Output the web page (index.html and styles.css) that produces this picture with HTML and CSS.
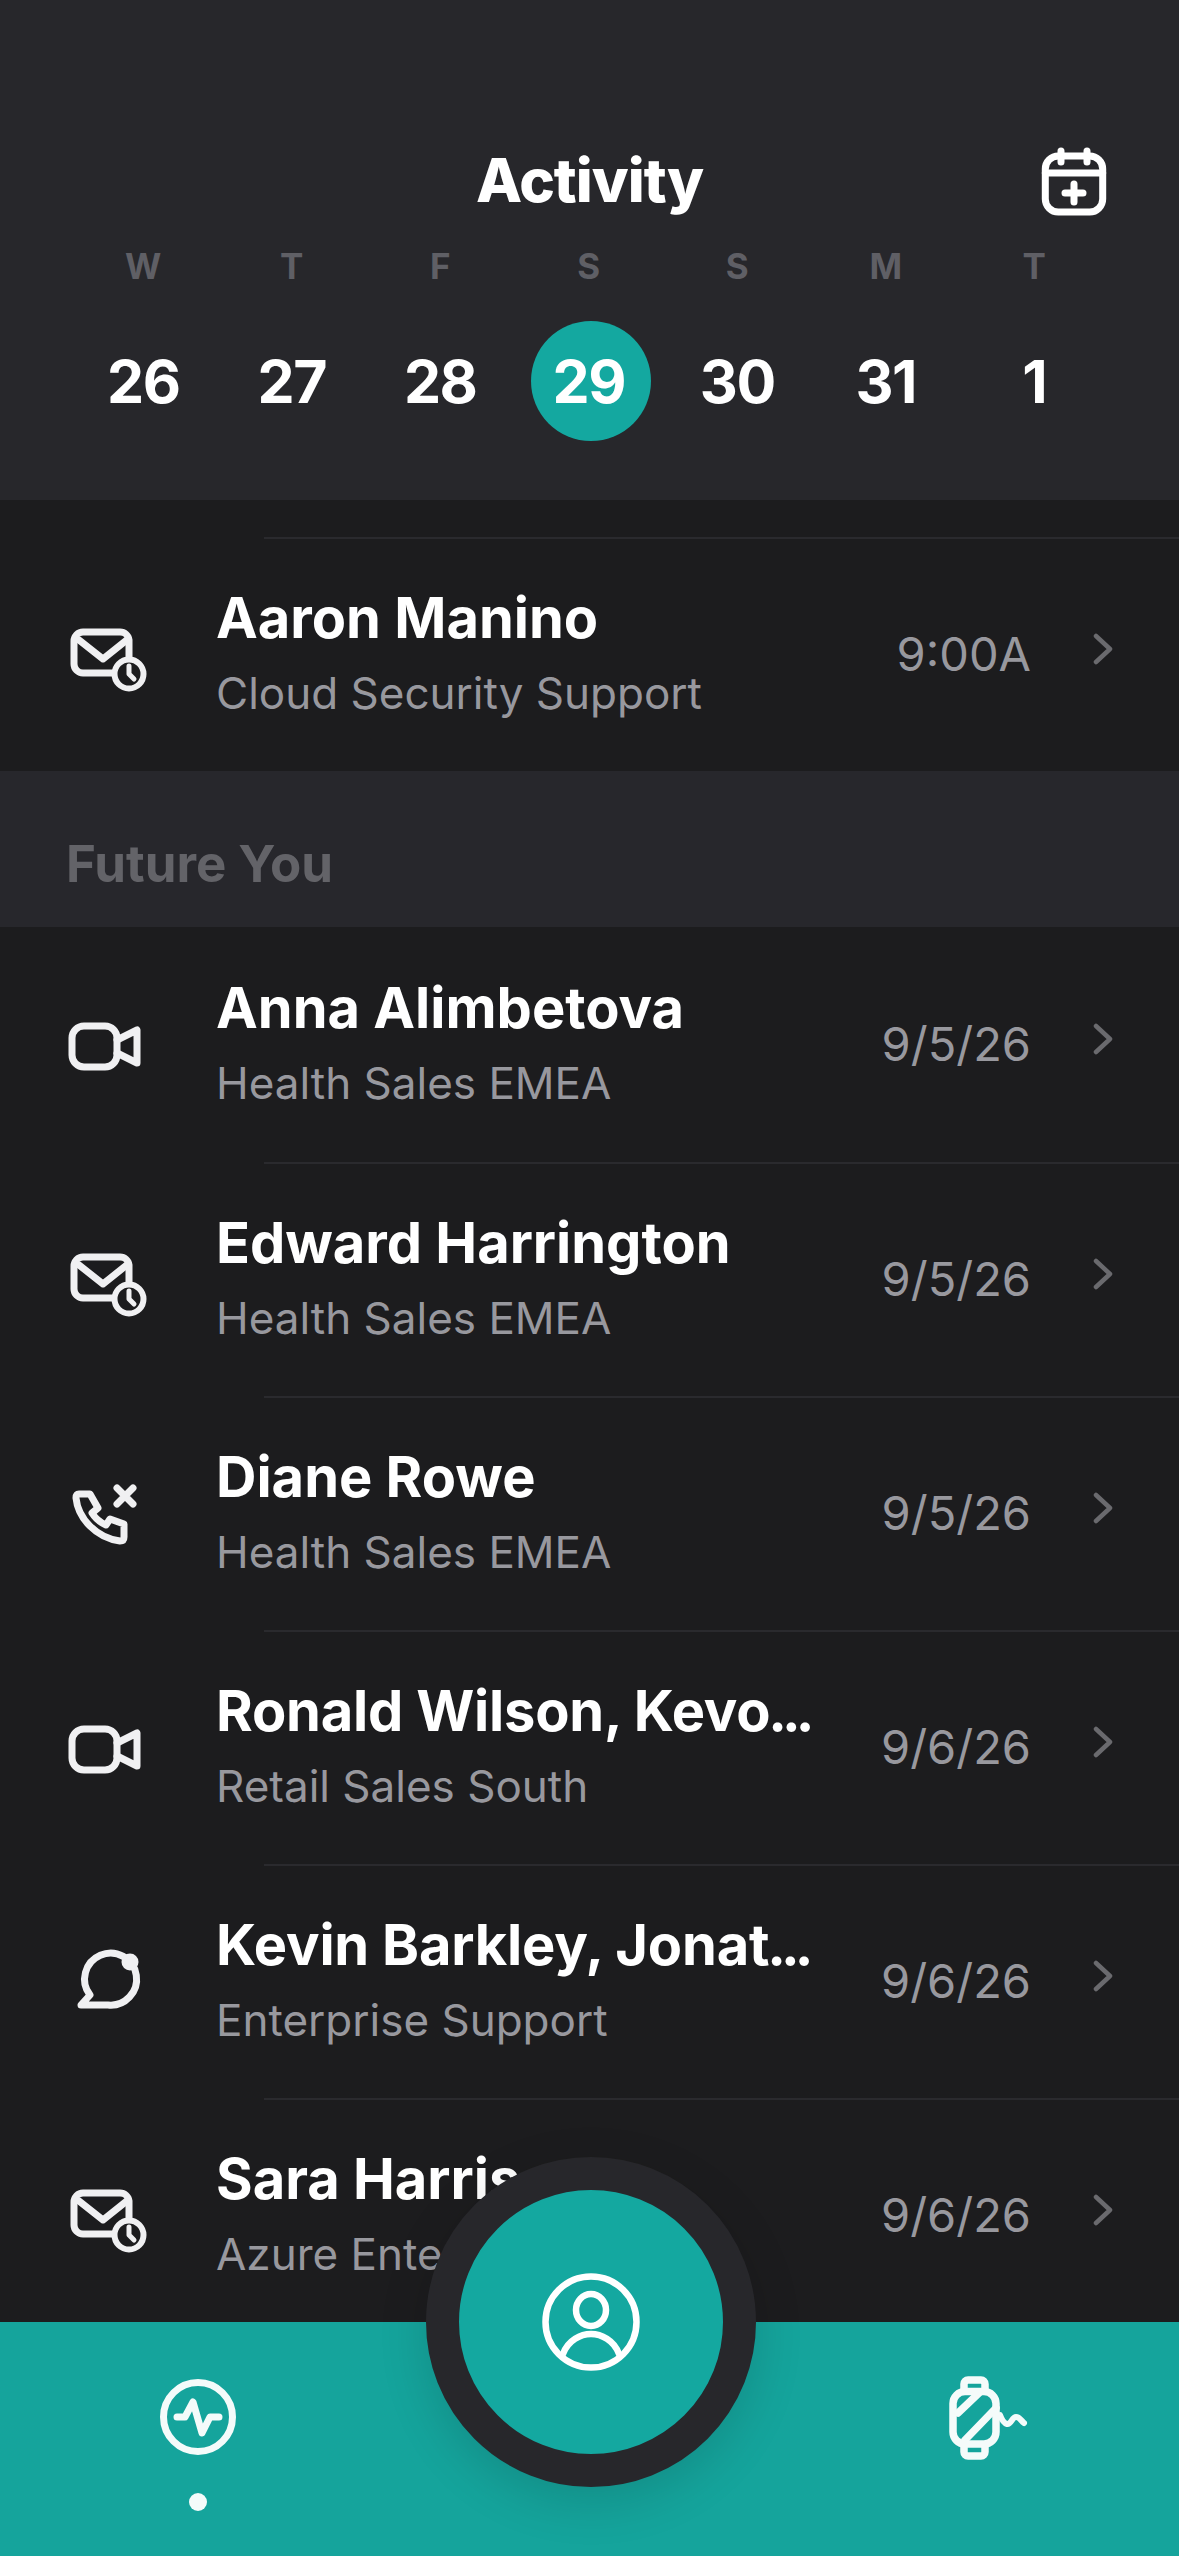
FILE: index.html
```html
<!DOCTYPE html>
<html lang="en">
<head>
<meta charset="utf-8">
<title>Activity</title>
<link rel="stylesheet" href="styles.css">
</head>
<body>
<svg class="defs" width="0" height="0" aria-hidden="true">
  <defs>
    <g id="i-mail" fill="none" stroke="#f0f0f2" stroke-width="7" stroke-linecap="round" stroke-linejoin="round">
      <path d="M46 60H17a9 9 0 0 1-9-9V28a9 9 0 0 1 9-9h37a9 9 0 0 1 9 8v16"/>
      <path d="M13 27l24 19 25-20"/>
      <circle cx="63" cy="61" r="14.5" stroke-width="6"/>
      <path d="M63 53v8l5 5" stroke-width="5"/>
    </g>
    <g id="i-video" fill="none" stroke="#f0f0f2" stroke-width="7" stroke-linecap="round" stroke-linejoin="round">
      <rect x="6" y="23" width="45" height="41" rx="12"/>
      <path d="M51 37l20-10v33L51 50"/>
    </g>
    <g id="i-phone" fill="none" stroke="#f0f0f2" stroke-width="7" stroke-linecap="round" stroke-linejoin="round">
      <path d="M13 22H24L32 36L26 41Q31 49 40 53L44 47L58 52V65Q58 69 54 69C30 66 12 46 10 26Q10 22 13 22Z"/>
      <path d="M51 16l16 16M67 16L51 32"/>
    </g>
    <g id="i-chat" fill="none" stroke="#f0f0f2" stroke-width="7" stroke-linecap="round" stroke-linejoin="round">
      <path d="M42 65H15L24 55A26 26 0 1 1 42 65Z"/>
      <circle cx="64" cy="22" r="8.5" fill="#f0f0f2" stroke="none"/>
    </g>
    <path id="i-chev" d="M4 4l14 13L4 30" fill="none" stroke="#6a6a6e" stroke-width="4.5" stroke-linecap="round" stroke-linejoin="round"/>
  </defs>
</svg>
<div class="app">
  <header class="head">
    <div class="titlebar">
      <h1 class="title">Activity</h1>
      <svg class="cal" width="66" height="70" viewBox="0 0 66 70" fill="none" stroke="#fff" stroke-width="7" stroke-linecap="round" stroke-linejoin="round"><rect x="4.3" y="10" width="57.4" height="56" rx="13"/><path d="M4.3 27h57.4M20 5v11M46 5v11M33 38v18M24 47h18"/></svg>
    </div>
    <div class="week">
      <span class="dow">W</span><span class="dow">T</span><span class="dow">F</span><span class="dow">S</span><span class="dow">S</span><span class="dow">M</span><span class="dow">T</span>
      <span class="num">26</span><span class="num">27</span><span class="num">28</span><span class="num num-on">29</span><span class="num">30</span><span class="num">31</span><span class="num">1</span>
    </div>
  </header>
  <main class="list">
    <div class="gap"></div>
    <div class="sep"></div>
    <div class="row">
      <svg class="ico" viewBox="0 0 84 84"><use href="#i-mail"/></svg>
      <div class="main"><div class="name">Aaron Manino</div><div class="sub">Cloud Security Support</div></div>
      <div class="when">9:00A</div>
      <svg class="chev" viewBox="0 0 21 34"><use href="#i-chev"/></svg>
    </div>
    <h2 class="section">Future You</h2>
    <div class="row row-first">
      <svg class="ico" viewBox="0 0 84 84"><use href="#i-video"/></svg>
      <div class="main"><div class="name">Anna Alimbetova</div><div class="sub">Health Sales EMEA</div></div>
      <div class="when">9/5/26</div>
      <svg class="chev" viewBox="0 0 21 34"><use href="#i-chev"/></svg>
    </div>
    <div class="sep"></div>
    <div class="row">
      <svg class="ico" viewBox="0 0 84 84"><use href="#i-mail"/></svg>
      <div class="main"><div class="name">Edward Harrington</div><div class="sub">Health Sales EMEA</div></div>
      <div class="when">9/5/26</div>
      <svg class="chev" viewBox="0 0 21 34"><use href="#i-chev"/></svg>
    </div>
    <div class="sep"></div>
    <div class="row">
      <svg class="ico" viewBox="0 0 84 84"><use href="#i-phone"/></svg>
      <div class="main"><div class="name">Diane Rowe</div><div class="sub">Health Sales EMEA</div></div>
      <div class="when">9/5/26</div>
      <svg class="chev" viewBox="0 0 21 34"><use href="#i-chev"/></svg>
    </div>
    <div class="sep"></div>
    <div class="row">
      <svg class="ico" viewBox="0 0 84 84"><use href="#i-video"/></svg>
      <div class="main"><div class="name name-tight">Ronald Wilson, Kevo<span class="ell">...</span></div><div class="sub">Retail Sales South</div></div>
      <div class="when">9/6/26</div>
      <svg class="chev" viewBox="0 0 21 34"><use href="#i-chev"/></svg>
    </div>
    <div class="sep"></div>
    <div class="row">
      <svg class="ico" viewBox="0 0 84 84"><use href="#i-chat"/></svg>
      <div class="main"><div class="name name-tight">Kevin Barkley, Jonat<span class="ell">...</span></div><div class="sub">Enterprise Support</div></div>
      <div class="when">9/6/26</div>
      <svg class="chev" viewBox="0 0 21 34"><use href="#i-chev"/></svg>
    </div>
    <div class="sep"></div>
    <div class="row">
      <svg class="ico" viewBox="0 0 84 84"><use href="#i-mail"/></svg>
      <div class="main"><div class="name">Sara Harris</div><div class="sub">Azure Enterprise</div></div>
      <div class="when">9/6/26</div>
      <svg class="chev" viewBox="0 0 21 34"><use href="#i-chev"/></svg>
    </div>
  </main>
  <nav class="tabs">
    <div class="tab">
      <svg width="78" height="78" viewBox="-39 -39 78 78" fill="none" stroke="#f4fbfa" stroke-width="7" stroke-linecap="round" stroke-linejoin="round"><circle r="34.5"/><path d="M-21 0h8l8-15 9 31 8-16h9"/></svg>
      <span class="dot"></span>
    </div>
    <div class="tab tab-watch">
      <svg width="90" height="95" viewBox="0 0 90 95" fill="none" stroke="#f4fbfa" stroke-width="7.5" stroke-linecap="round" stroke-linejoin="round"><rect x="8" y="19.6" width="43" height="52.4" rx="12"/><path d="M19 18v-6a4 4 0 0 1 4-4h13a4 4 0 0 1 4 4v6M19 74v6a4 4 0 0 0 4 4h13a4 4 0 0 0 4-4v-6M13 41L35 20M20 68L51 36"/><path d="M55 43q3 8 7 9c4 1 5-7 9-7s5 4 8 6" stroke-width="6"/></svg>
    </div>
    <button class="fab" type="button" aria-label="Profile">
      <svg width="100" height="100" viewBox="-50 -50 100 100" fill="none" stroke="#fff" stroke-width="6.5" stroke-linecap="round"><circle r="45.5"/><ellipse cy="-12" rx="15" ry="16"/><path d="M-28 32C-23 18-10 12 0 12S23 18 28 32"/></svg>
    </button>
  </nav>
</div>
</body>
</html>
```
FILE: styles.css
```css
* { box-sizing: border-box; margin: 0; padding: 0; }
html, body { background: #1c1c1e; }
body { font-family: "Inter", "Liberation Sans", sans-serif; color: #fff; }
.defs { position: absolute; }
.app { width: 1179px; height: 2556px; display: flex; flex-direction: column; overflow: hidden; position: relative; }

.head { height: 500px; flex: none; background: #27272b; padding-top: 145px; }
.titlebar { height: 70px; padding: 0 72px; display: flex; justify-content: flex-end; align-items: center; position: relative; }
.title { position: absolute; left: 0; right: 0; top: 0; text-align: center; font-size: 60px; line-height: 70px; font-weight: 800; letter-spacing: -1px; }
.cal { margin-top: 2px; }
.week { margin-top: 29px; padding: 0 69px; display: grid; grid-template-columns: repeat(7, 148.5px); grid-auto-rows: auto; justify-items: center; align-items: center; }
.dow { font-size: 35px; line-height: 44px; font-weight: 700; color: #5f5f65; }
.num { width: 120px; height: 120px; margin-top: 33px; border-radius: 50%; display: flex; align-items: center; justify-content: center; font-size: 59px; font-weight: 700; letter-spacing: -1.5px; }
.num-on { background: #14a8a0; margin-left: 4px; padding-right: 4px; }

.list { flex: 1; min-height: 0; overflow: hidden; background: #1c1c1e; }
.gap { height: 37px; }
.sep { height: 2px; margin-left: 264px; background: #2a2a2e; }
.row { height: 232px; padding: 0 66px; display: flex; align-items: center; }
.row-first { height: 235px; }
.ico { width: 84px; height: 84px; flex: none; }
.main { width: 620px; margin-left: 66px; margin-bottom: 5px; flex: none; white-space: nowrap; }
.name { font-size: 56px; line-height: 66px; font-weight: 700; }
.name-tight { letter-spacing: -0.2px; }
.ell { letter-spacing: -5px; margin-left: -2px; }
.sub { margin-top: 15px; font-size: 44px; line-height: 54px; color: #98989e; }
.when { flex: 1; margin-bottom: 3px; text-align: right; font-size: 47px; color: #98989e; white-space: nowrap; }
.chev { width: 21px; height: 34px; margin-left: 61px; flex: none; margin-top: -12px; }
.section { height: 156px; background: #27272c; padding: 28px 66px 0; display: flex; align-items: center; font-size: 51px; font-weight: 700; color: #636368; }

.tabs { height: 234px; flex: none; background: #15a49c; position: relative; display: flex; justify-content: space-between; padding: 0 144px 0 159px; z-index: 2; }
.tab { padding-top: 56px; display: flex; flex-direction: column; align-items: center; }
.tab-watch { padding-top: 50px; }
.dot { width: 18px; height: 18px; margin-top: 37px; border-radius: 50%; background: #f4fbfa; }
.fab { position: absolute; left: 426px; top: -165px; width: 330px; height: 330px; border-radius: 50%; border: 33px solid #27272b; background: #14a8a0; display: flex; align-items: center; justify-content: center; box-shadow: 0 14px 50px rgba(0,0,0,.14); }
```
